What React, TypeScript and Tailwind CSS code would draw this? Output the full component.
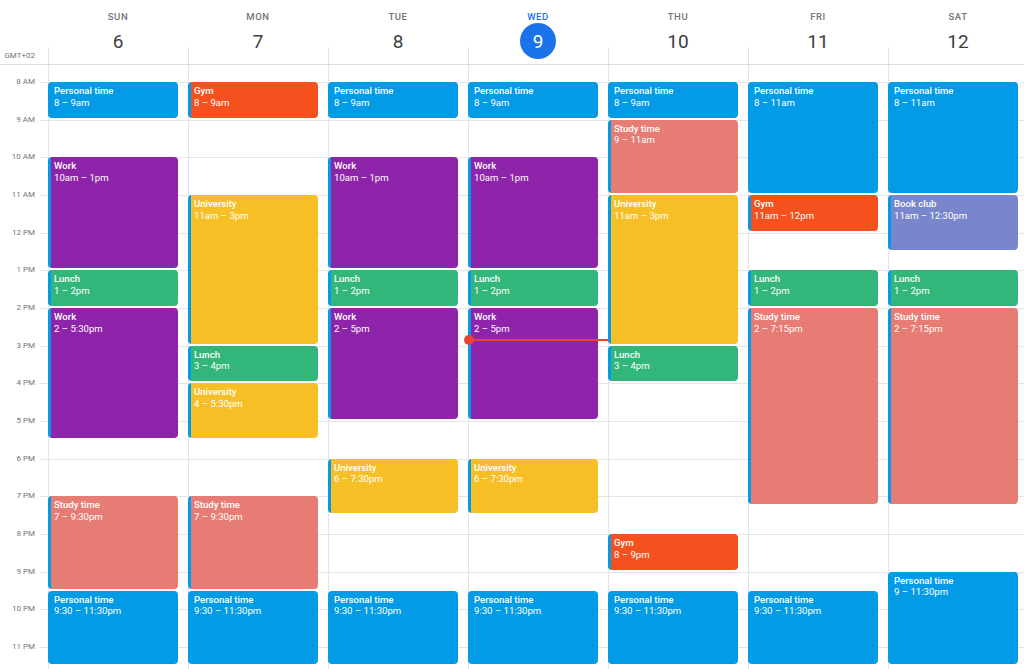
import React from 'react';

const HOUR = 37.67;
const OFFSET = 17;

type Ev = { start: number; end: number; title: string; time: string; color: string };

const blue = 'bg-[#039be5]';
const purple = 'bg-[#8e24aa]';
const green = 'bg-[#33b679]';
const yellow = 'bg-[#f6bf26]';
const orange = 'bg-[#f4511e]';
const salmon = 'bg-[#e67c73]';
const lavender = 'bg-[#7986cb]';

const personal = (start: number, end: number, time: string): Ev => ({ start, end, title: 'Personal time', time, color: blue });
const night = personal(21.5, 23.5, '9:30 – 11:30pm');

const days: { name: string; date: number; today?: boolean; events: Ev[] }[] = [
  {
    name: 'SUN', date: 6, events: [
      personal(8, 9, '8 – 9am'),
      { start: 10, end: 13, title: 'Work', time: '10am – 1pm', color: purple },
      { start: 13, end: 14, title: 'Lunch', time: '1 – 2pm', color: green },
      { start: 14, end: 17.5, title: 'Work', time: '2 – 5:30pm', color: purple },
      { start: 19, end: 21.5, title: 'Study time', time: '7 – 9:30pm', color: salmon },
      night,
    ],
  },
  {
    name: 'MON', date: 7, events: [
      { start: 8, end: 9, title: 'Gym', time: '8 – 9am', color: orange },
      { start: 11, end: 15, title: 'University', time: '11am – 3pm', color: yellow },
      { start: 15, end: 16, title: 'Lunch', time: '3 – 4pm', color: green },
      { start: 16, end: 17.5, title: 'University', time: '4 – 5:30pm', color: yellow },
      { start: 19, end: 21.5, title: 'Study time', time: '7 – 9:30pm', color: salmon },
      night,
    ],
  },
  {
    name: 'TUE', date: 8, events: [
      personal(8, 9, '8 – 9am'),
      { start: 10, end: 13, title: 'Work', time: '10am – 1pm', color: purple },
      { start: 13, end: 14, title: 'Lunch', time: '1 – 2pm', color: green },
      { start: 14, end: 17, title: 'Work', time: '2 – 5pm', color: purple },
      { start: 18, end: 19.5, title: 'University', time: '6 – 7:30pm', color: yellow },
      night,
    ],
  },
  {
    name: 'WED', date: 9, today: true, events: [
      personal(8, 9, '8 – 9am'),
      { start: 10, end: 13, title: 'Work', time: '10am – 1pm', color: purple },
      { start: 13, end: 14, title: 'Lunch', time: '1 – 2pm', color: green },
      { start: 14, end: 17, title: 'Work', time: '2 – 5pm', color: purple },
      { start: 18, end: 19.5, title: 'University', time: '6 – 7:30pm', color: yellow },
      night,
    ],
  },
  {
    name: 'THU', date: 10, events: [
      personal(8, 9, '8 – 9am'),
      { start: 9, end: 11, title: 'Study time', time: '9 – 11am', color: salmon },
      { start: 11, end: 15, title: 'University', time: '11am – 3pm', color: yellow },
      { start: 15, end: 16, title: 'Lunch', time: '3 – 4pm', color: green },
      { start: 20, end: 21, title: 'Gym', time: '8 – 9pm', color: orange },
      night,
    ],
  },
  {
    name: 'FRI', date: 11, events: [
      personal(8, 11, '8 – 11am'),
      { start: 11, end: 12, title: 'Gym', time: '11am – 12pm', color: orange },
      { start: 13, end: 14, title: 'Lunch', time: '1 – 2pm', color: green },
      { start: 14, end: 19.25, title: 'Study time', time: '2 – 7:15pm', color: salmon },
      night,
    ],
  },
  {
    name: 'SAT', date: 12, events: [
      personal(8, 11, '8 – 11am'),
      { start: 11, end: 12.5, title: 'Book club', time: '11am – 12:30pm', color: lavender },
      { start: 13, end: 14, title: 'Lunch', time: '1 – 2pm', color: green },
      { start: 14, end: 19.25, title: 'Study time', time: '2 – 7:15pm', color: salmon },
      personal(21, 23.5, '9 – 11:30pm'),
    ],
  },
];

const hours = ['8 AM', '9 AM', '10 AM', '11 AM', '12 PM', '1 PM', '2 PM', '3 PM', '4 PM', '5 PM', '6 PM', '7 PM', '8 PM', '9 PM', '10 PM', '11 PM'];

function EventCard({ ev }: { ev: Ev }) {
  return (
    <div
      className="absolute -left-px right-[10px] flex overflow-hidden rounded-[4px] text-white"
      style={{ top: OFFSET + (ev.start - 8) * HOUR, height: (ev.end - ev.start) * HOUR - 2 }}
    >
      <div className="w-[3px] shrink-0 bg-[#039be5]" />
      <div className={`flex-1 pl-[3px] pt-[3px] text-[9.6px] leading-[11.7px] ${ev.color}`}>
        <div className="font-medium">{ev.title}</div>
        <div>{ev.time}</div>
      </div>
    </div>
  );
}

export default function App() {
  return (
    <div className="w-[1024px] h-[669px] overflow-hidden bg-white font-['Roboto','Liberation_Sans',sans-serif]">
      {/* header */}
      <div className="flex h-[65px] border-b border-[#dadce0]">
        <div className="relative w-[48px] shrink-0">
          <span className="absolute right-[13px] top-[51px] text-[8px] leading-[10px] text-[#70757a]">GMT+02</span>
        </div>
        {days.map((d) => (
          <div key={d.name} className="relative flex w-[140px] shrink-0 flex-col items-center">
            <span className={`mt-[11px] text-[9.5px] font-medium leading-[12px] tracking-[0.6px] ${d.today ? 'text-[#1a73e8]' : 'text-[#70757a]'}`}>
              {d.name}
            </span>
            <span
              className={`flex h-[36px] w-[36px] items-center justify-center rounded-full text-[19px] leading-none ${d.today ? 'bg-[#1a73e8] text-white' : 'text-[#3c4043]'}`}
            >
              {d.date}
            </span>
            <div className="absolute bottom-0 left-0 h-[17px] border-l border-[#e3e5e8]" />
          </div>
        ))}
      </div>

      {/* body */}
      <div className="flex h-[604px] overflow-hidden">
        <div className="w-[48px] shrink-0 pt-[17px]">
          {hours.map((h) => (
            <div key={h} className="relative h-[37.67px]">
              <span className="absolute right-[13px] top-0 -translate-y-1/2 text-[8px] leading-[10px] text-[#70757a]">{h}</span>
              <div className="absolute right-0 top-0 w-[8px] border-t border-[#e3e5e8]" />
            </div>
          ))}
        </div>
        {days.map((d) => (
          <div key={d.name} className="relative w-[140px] shrink-0 border-l border-[#e3e5e8]">
            <div className="pt-[17px]">
              {hours.map((h) => (
                <div key={h} className="h-[37.67px] border-t border-[#e3e5e8]" />
              ))}
            </div>
            {d.events.map((ev, i) => (
              <EventCard key={i} ev={ev} />
            ))}
            {d.today && (
              <div className="absolute left-0 right-0 top-[274px] z-10 h-[2px] bg-[#ea4335]">
                <div className="absolute left-[-5px] top-[-4px] h-[10px] w-[10px] rounded-full bg-[#ea4335]" />
              </div>
            )}
          </div>
        ))}
      </div>
    </div>
  );
}
